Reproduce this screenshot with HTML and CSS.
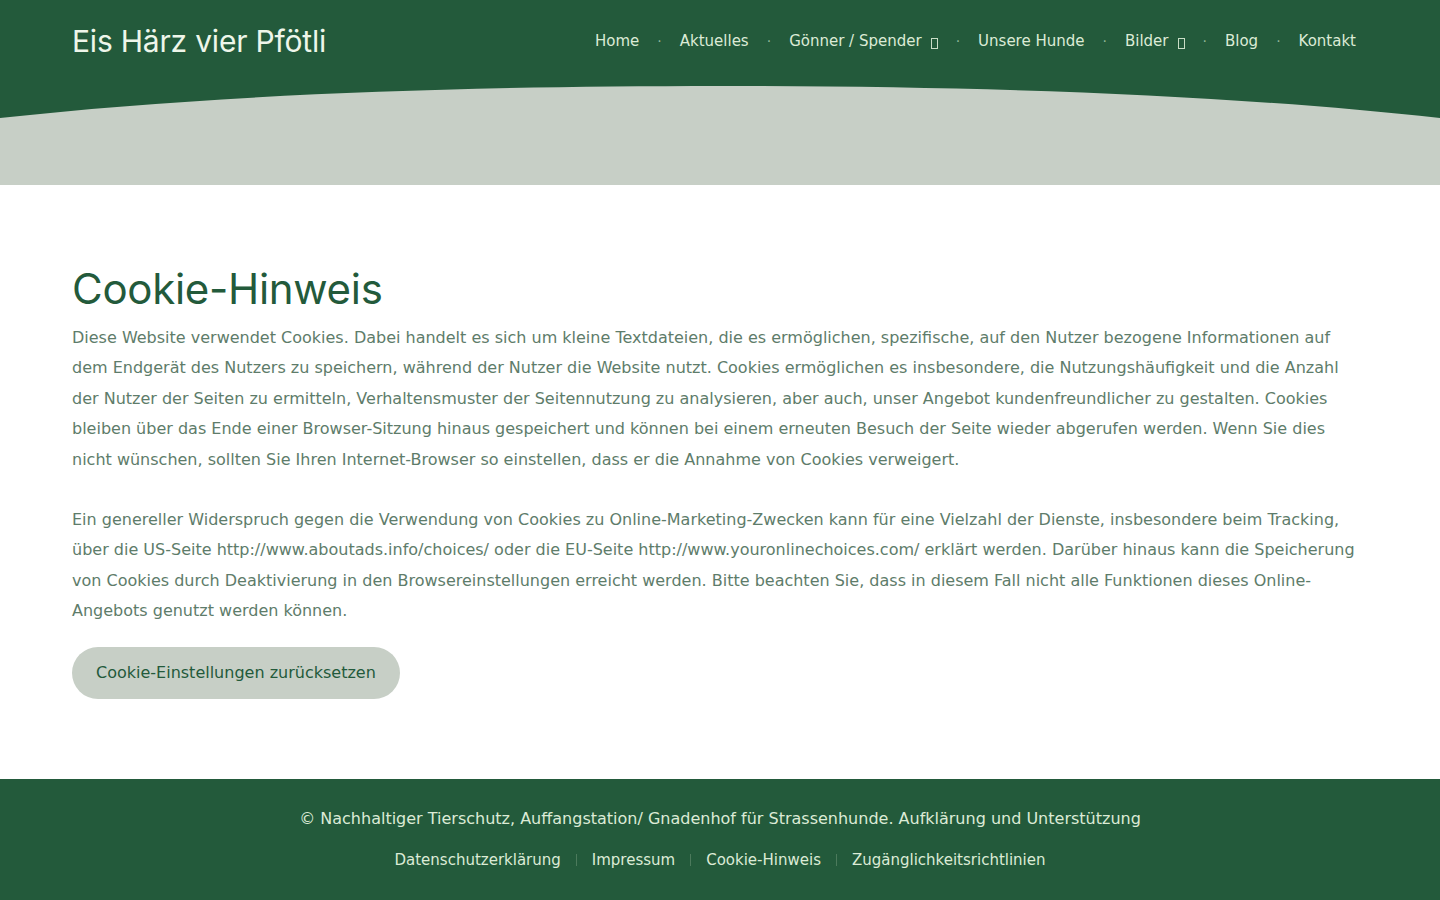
FILE: index.html
```html
<!DOCTYPE html>
<html lang="de">
<head>
<meta charset="utf-8">
<title>Cookie-Hinweis – Eis Härz vier Pfötli</title>
<link rel="stylesheet" href="styles.css">
</head>
<body>
<header class="site-header">
  <div class="bar">
    <a class="logo" href="#">Eis Härz vier Pfötli</a>
    <nav class="nav">
      <a href="#">Home</a>
      <a href="#">Aktuelles</a>
      <a href="#">Gönner / Spender<span class="caret"></span></a>
      <a href="#">Unsere Hunde</a>
      <a href="#">Bilder<span class="caret"></span></a>
      <a href="#">Blog</a>
      <a href="#">Kontakt</a>
    </nav>
  </div>
  <svg class="wave" viewBox="0 0 1440 32" preserveAspectRatio="none" aria-hidden="true">
    <path d="M0 0 H1440 V32 C1240 10 1000 0 720 0 C440 0 200 10 0 32 Z" fill="#235a3b"/>
  </svg>
  <div class="band"></div>
</header>

<main class="content">
  <h1 class="title">Cookie-Hinweis</h1>
  <p>Diese Website verwendet Cookies. Dabei handelt es sich um kleine Textdateien, die es ermöglichen, spezifische, auf den Nutzer bezogene Informationen auf dem Endgerät des Nutzers zu speichern, während der Nutzer die Website nutzt. Cookies ermöglichen es insbesondere, die Nutzungshäufigkeit und die Anzahl der Nutzer der Seiten zu ermitteln, Verhaltensmuster der Seitennutzung zu analysieren, aber auch, unser Angebot kundenfreundlicher zu gestalten. Cookies bleiben über das Ende einer Browser-Sitzung hinaus gespeichert und können bei einem erneuten Besuch der Seite wieder abgerufen werden. Wenn Sie dies nicht wünschen, sollten Sie Ihren Internet-Browser so einstellen, dass er die Annahme von Cookies verweigert.</p>
  <p class="last">Ein genereller Widerspruch gegen die Verwendung von Cookies zu Online-Marketing-Zwecken kann für eine Vielzahl der Dienste, insbesondere beim Tracking, über die US-Seite http://www.aboutads.info/choices/ oder die EU-Seite http://www.youronlinechoices.com/ erklärt werden. Darüber hinaus kann die Speicherung von Cookies durch Deaktivierung in den Browsereinstellungen erreicht werden. Bitte beachten Sie, dass in diesem Fall nicht alle Funktionen dieses Online-Angebots genutzt werden können.</p>
  <button class="btn" type="button">Cookie-Einstellungen zurücksetzen</button>
</main>

<footer class="site-footer">
  <p class="copy">© Nachhaltiger Tierschutz, Auffangstation/ Gnadenhof für Strassenhunde. Aufklärung und Unterstützung</p>
  <nav class="legal">
    <a href="#">Datenschutzerklärung</a>
    <a href="#">Impressum</a>
    <a href="#">Cookie-Hinweis</a>
    <a href="#">Zugänglichkeitsrichtlinien</a>
  </nav>
</footer>
</body>
</html>
```

FILE: styles.css
```css
* { box-sizing: border-box; }

html, body {
  margin: 0;
  padding: 0;
  background: #ffffff;
}

body {
  font-family: "DejaVu Sans", sans-serif;
  color: #5e7c6a;
}

a { text-decoration: none; color: inherit; }

.site-header {
  background: #c7cfc6;
}

.bar {
  background: #235a3b;
  height: 86px;
  padding: 0 84px 0 72px;
  display: flex;
  align-items: flex-start;
  justify-content: space-between;
}

.logo {
  font-family: "Inter", "Open Sans", sans-serif;
  font-size: 30px;
  color: #eef6ea;
  line-height: 1;
  margin-top: 26px;
  letter-spacing: -0.2px;
}

.nav {
  display: flex;
  align-items: center;
  margin-top: 32px;
  font-size: 15px;
  line-height: 18px;
}

.nav a {
  color: #dcebd6;
  display: flex;
  align-items: center;
}

.nav a + a::before {
  content: "·";
  color: #8fb598;
  margin: 0 18px 0 18px;
  font-size: 14px;
}

.caret {
  display: inline-block;
  width: 7px;
  height: 11px;
  border: 1px solid #dcebd6;
  margin-left: 9px;
  margin-top: 4px;
  opacity: 0.9;
}

.wave {
  display: block;
  width: 100%;
  height: 32px;
}

.band {
  height: 67px;
}

.content {
  padding: 79px 72px 80px;
}

.title {
  font-family: "Inter", "Open Sans", sans-serif;
  font-weight: 400;
  font-size: 42px;
  line-height: 50px;
  color: #235a3b;
  margin: 0 0 9px;
  letter-spacing: -0.3px;
}

.content p {
  font-size: 16px;
  line-height: 30.4px;
  margin: 0 0 30px;
}

.content p.last {
  margin-bottom: 20px;
}

.btn {
  display: block;
  font-family: "DejaVu Sans", sans-serif;
  font-size: 16px;
  color: #235a3b;
  background: #c7cfc6;
  border: 0;
  border-radius: 26px;
  height: 52px;
  padding: 0 24px;
  margin: 0;
  cursor: pointer;
}

.site-footer {
  background: #235a3b;
  color: #dcebd6;
  text-align: center;
  padding: 29px 0 30px;
  min-height: 121px;
}

.copy {
  margin: 0;
  font-size: 16px;
  line-height: 22px;
}

.legal {
  display: flex;
  justify-content: center;
  margin-top: 20px;
  font-size: 15px;
  line-height: 20px;
}

.legal a + a::before {
  content: "";
  display: inline-block;
  width: 1px;
  height: 12px;
  background: #4c7a5c;
  margin: 0 15px;
  vertical-align: -1px;
}
```
